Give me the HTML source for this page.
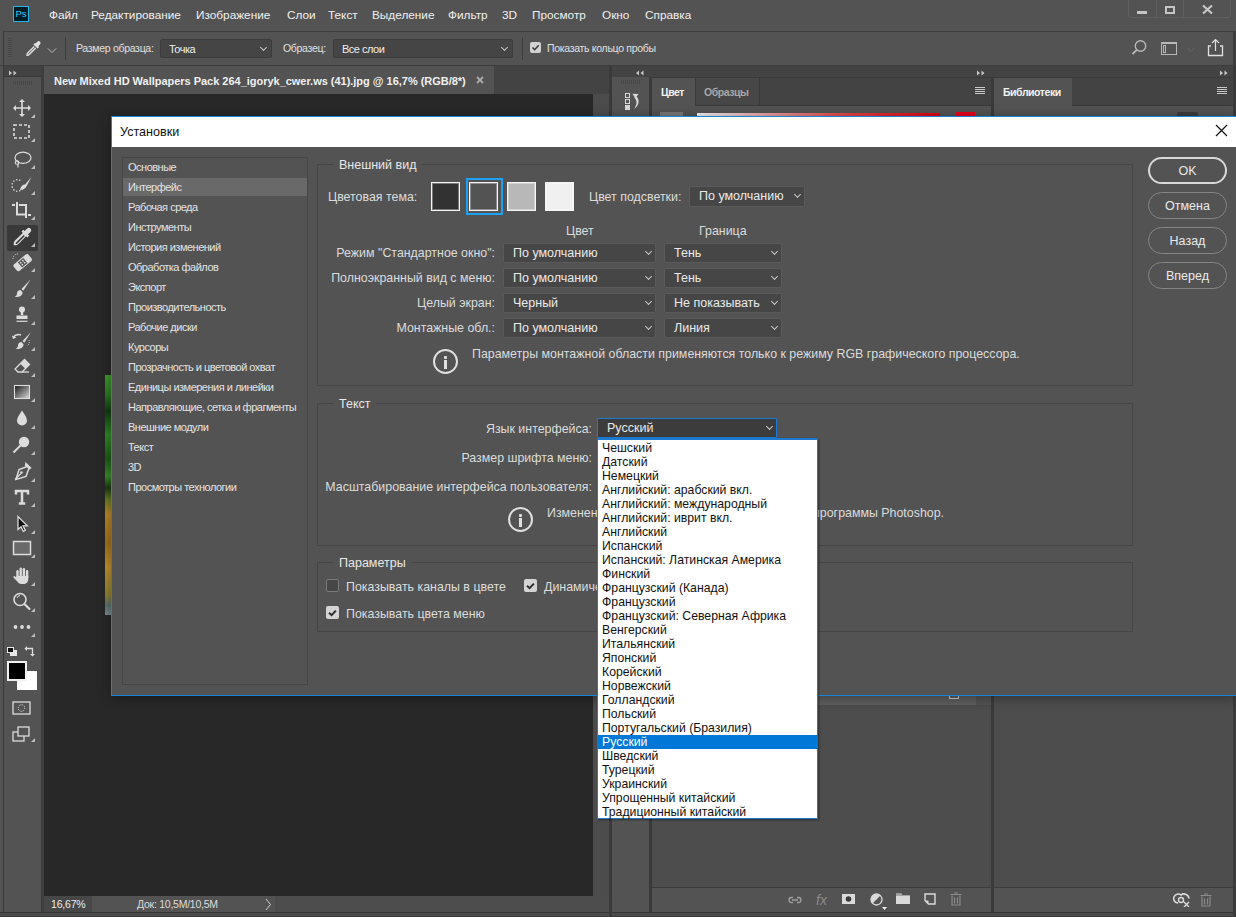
<!DOCTYPE html>
<html><head><meta charset="utf-8">
<style>
*{margin:0;padding:0;box-sizing:border-box}
html,body{width:1236px;height:917px;overflow:hidden;background:#535353;font-family:"Liberation Sans",sans-serif;color:#e6e6e6;position:relative}
.a{position:absolute}
.t{position:absolute;white-space:nowrap;font-size:12px;line-height:14px}
.mn{position:absolute;white-space:nowrap;font-size:11.8px;line-height:14px;color:#f0f0f0;top:8px}
.ob{position:absolute;white-space:nowrap;font-size:10.5px;letter-spacing:-0.3px;line-height:14px;color:#e0e0e0}
.osl{position:absolute;background:#454545;border:1px solid #3c3c3c;border-radius:2px;height:19px;top:39px}
.osl span{position:absolute;left:8px;top:2px;font-size:11px;letter-spacing:-0.5px;line-height:14px;color:#eee;white-space:nowrap}
.osl i,.sl i{position:absolute;width:6px;height:6px;border-right:1px solid #c8c8c8;border-bottom:1px solid #c8c8c8;transform:rotate(45deg)}
.osl i{right:5px;top:5px;width:5px;height:5px}
.sb{position:absolute;left:128px;white-space:nowrap;font-size:11px;line-height:14px;color:#e3e3e3;letter-spacing:-0.5px}
.lb{position:absolute;white-space:nowrap;font-size:12.4px;line-height:14px;color:#dcdcdc}
.lbr{position:absolute;white-space:nowrap;font-size:12.4px;line-height:14px;color:#dcdcdc;text-align:right}
.fs{position:absolute;border:1px solid #454545;border-radius:1px}
.lg{position:absolute;background:#535353;padding:1px 6px 0;white-space:nowrap;font-size:12.5px;line-height:14px;color:#e8e8e8}
.sl{position:absolute;background:#464646;border:1px solid #5a5a5a;border-radius:2px;height:20px}
.sl span{position:absolute;left:9px;top:2px;font-size:12.5px;line-height:14px;color:#eaeaea;white-space:nowrap}
.sl i{right:4px;top:5px;width:5px;height:5px}
.sw{position:absolute;width:29px;height:29px;border:1px solid #f4f4f4;box-shadow:inset 0 0 0 1px rgba(255,255,255,.35)}
.bt{position:absolute;left:1148px;width:79px;height:27px;border:1px solid #858585;border-radius:14px;text-align:center;font-size:12.5px;line-height:26px;color:#eaeaea}
.cb{position:absolute;width:13px;height:13px;border-radius:2px}
.li{position:absolute;left:0;width:220px;height:14px;padding-left:4px;font-size:12.25px;line-height:14px;color:#111;white-space:nowrap}
.li.hl{background:#0078d7;color:#fff}
.info{position:absolute;width:25px;height:25px;border:2px solid #e0e0e0;border-radius:50%}
.info:before{content:"";position:absolute;left:9px;top:4.5px;width:3px;height:3px;background:#e0e0e0;border-radius:1px}
.info:after{content:"";position:absolute;left:9px;top:9px;width:3px;height:9px;background:#e0e0e0}
.ic{position:absolute}
.tab{position:absolute;white-space:nowrap;font-size:10.5px;line-height:14px;font-weight:bold;letter-spacing:-0.45px}

</style></head><body>
<!-- ===== MENU BAR ===== -->
<div class="a" style="left:13px;top:6px;width:16px;height:16px;background:#001d26;border:1px solid #27b6e8"></div>
<div class="t" style="left:15.5px;top:8px;font-size:9.5px;line-height:11px;color:#3cc8f5;letter-spacing:-0.2px">Ps</div>
<div class="mn" style="left:49px">Файл</div>
<div class="mn" style="left:91px">Редактирование</div>
<div class="mn" style="left:196px">Изображение</div>
<div class="mn" style="left:287px">Слои</div>
<div class="mn" style="left:328px">Текст</div>
<div class="mn" style="left:372px">Выделение</div>
<div class="mn" style="left:448px">Фильтр</div>
<div class="mn" style="left:502px">3D</div>
<div class="mn" style="left:532px">Просмотр</div>
<div class="mn" style="left:602px">Окно</div>
<div class="mn" style="left:645px">Справка</div>
<!-- window controls -->
<div class="a" style="left:1128px;top:-3px;width:103px;height:21px;border:1px solid #5e5e5e;border-radius:3px"></div>
<div class="a" style="left:1156px;top:0;width:1px;height:18px;background:#5e5e5e"></div>
<div class="a" style="left:1183px;top:0;width:1px;height:18px;background:#5e5e5e"></div>
<div class="a" style="left:1137px;top:11px;width:10px;height:3px;background:#c4c4c4"></div>
<div class="a" style="left:1165px;top:6px;width:10px;height:8px;border:2px solid #c4c4c4"></div>
<svg class="ic" style="left:1201px;top:4px" width="13" height="11"><path d="M2 1.5L11 9.5M11 1.5L2 9.5" stroke="#c8c8c8" stroke-width="2.2"/></svg>

<!-- ===== OPTIONS BAR ===== -->
<div class="a" style="left:3px;top:31px;width:1233px;height:1px;background:#3e3e3e"></div>
<div class="a" style="left:3px;top:31px;width:1px;height:886px;background:#3a3a3a"></div>
<div class="a" style="left:1233px;top:32px;width:3px;height:34px;background:#3e3e3e"></div>
<div class="a" style="left:0;top:65px;width:1236px;height:1px;background:#3e3e3e"></div>
<svg class="ic" style="left:7px;top:38px" width="6" height="22"><path d="M1 .5h4M1 2.5h4M1 4.5h4M1 6.5h4M1 8.5h4M1 10.5h4M1 12.5h4M1 14.5h4M1 16.5h4M1 18.5h4" stroke="#474747" stroke-width="1"/></svg>
<svg class="ic" style="left:24px;top:40px" width="18" height="18"><path d="M11.5 3.5l1.8-1.8a1.9 1.9 0 0 1 2.7 2.7l-1.8 1.8 .9.9-1.5 1.5-4.2-4.2 1.5-1.5z" fill="#e0e0e0"/><path d="M10.3 6.5L4 12.8c-.9.9-1.2 1.8-1 2.5.7.3 1.6-.1 2.5-1l6.3-6.3" stroke="#e0e0e0" stroke-width="1.4" fill="none"/></svg>
<svg class="ic" style="left:47px;top:47px" width="10" height="7"><path d="M1 1.5l4 4 4-4" stroke="#bdbdbd" stroke-width="1" fill="none"/></svg>
<div class="a" style="left:65px;top:37px;width:1px;height:23px;background:#3e3e3e"></div>
<div class="ob" style="left:76px;top:41px">Размер образца:</div>
<div class="osl" style="left:160px;width:112px"><span>Точка</span><i></i></div>
<div class="ob" style="left:283px;top:41px">Образец:</div>
<div class="osl" style="left:333px;width:180px"><span>Все слои</span><i></i></div>
<div class="a" style="left:522px;top:37px;width:1px;height:23px;background:#3e3e3e"></div>
<div class="a" style="left:530px;top:42px;width:11px;height:11px;background:#d2d2d2;border-radius:2px"></div>
<svg class="ic" style="left:530px;top:42px" width="11" height="11"><path d="M2.5 5.5l2.2 2.2 4-4.5" stroke="#3a3a3a" stroke-width="1.6" fill="none"/></svg>
<div class="ob" style="left:547px;top:41px">Показать кольцо пробы</div>
<svg class="ic" style="left:1130px;top:39px" width="18" height="18"><circle cx="10.5" cy="7" r="5.2" stroke="#b8b8b8" stroke-width="1.4" fill="none"/><path d="M6.8 10.8L2.5 15" stroke="#b8b8b8" stroke-width="1.8"/></svg>
<svg class="ic" style="left:1160px;top:41px" width="19" height="15"><rect x="1.5" y="1.5" width="15" height="12" stroke="#b8b8b8" stroke-width="1" fill="none"/><path d="M1.5 2.5h15" stroke="#b8b8b8"/><rect x="3.5" y="4.5" width="2" height="7" stroke="#b8b8b8" stroke-width="1" fill="none"/></svg>
<svg class="ic" style="left:1186px;top:46px" width="10" height="7"><path d="M1 1.5l4 4 4-4" stroke="#6a6a6a" stroke-width="1" fill="none"/></svg>
<svg class="ic" style="left:1206px;top:38px" width="19" height="19"><path d="M5 8H2.5v9.5h14V8H14" stroke="#e0e0e0" stroke-width="1.3" fill="none"/><path d="M9.5 13V1.8M6 5l3.5-3.5L13 5" stroke="#e0e0e0" stroke-width="1.2" fill="none"/></svg>

<!-- ===== TOOLBAR ===== -->
<div class="a" style="left:4px;top:66px;width:37px;height:11px;background:#434343;border-bottom:1px solid #3a3a3a"></div>
<svg class="ic" style="left:9px;top:70px" width="10" height="6"><path d="M0 0.5l3 2.5-3 2.5zM4.5 0.5l3 2.5-3 2.5z" fill="#c8c8c8"/></svg>
<svg class="ic" style="left:13px;top:81px" width="22" height="5"><path d="M.5 0v4M2.5 0v4M4.5 0v4M6.5 0v4M8.5 0v4M10.5 0v4M12.5 0v4M14.5 0v4M16.5 0v4M18.5 0v4" stroke="#474747"/></svg>
<div class="a" style="left:41px;top:66px;width:3px;height:851px;background:#3e3e3e"></div>
<div id="tools"><svg class="ic" style="left:10px;top:96px" width="24" height="24" viewBox="0 0 24 24"><path d="M12 4.5v15M4.5 12h15" stroke="#dcdcdc" stroke-width="1.6"/><path d="M12 3l3 3h-6zM12 21l3-3h-6zM3 12l3-3v6zM21 12l-3-3v6z" fill="#dcdcdc"/></svg><svg class="ic" style="left:31px;top:114px" width="4" height="4"><path d="M4 0v4h-4z" fill="#bdbdbd"/></svg>
<svg class="ic" style="left:10px;top:120px" width="24" height="24" viewBox="0 0 24 24"><rect x="4" y="5" width="15" height="13" stroke="#dcdcdc" stroke-width="1.6" fill="none" stroke-dasharray="3 2"/></svg><svg class="ic" style="left:31px;top:138px" width="4" height="4"><path d="M4 0v4h-4z" fill="#bdbdbd"/></svg>
<svg class="ic" style="left:10px;top:147px" width="24" height="24" viewBox="0 0 24 24"><ellipse cx="13" cy="10.8" rx="8" ry="5.6" stroke="#dcdcdc" stroke-width="1.2" fill="none"/><circle cx="7" cy="15.5" r="1.8" stroke="#dcdcdc" stroke-width="1.1" fill="none"/><path d="M8 17v3.5" stroke="#dcdcdc" stroke-width="1.2"/></svg><svg class="ic" style="left:31px;top:165px" width="4" height="4"><path d="M4 0v4h-4z" fill="#bdbdbd"/></svg>
<svg class="ic" style="left:10px;top:173px" width="24" height="24" viewBox="0 0 24 24"><circle cx="12.13" cy="15.64" r="0.8" fill="#dcdcdc"/><circle cx="9.78" cy="17.78" r="0.8" fill="#dcdcdc"/><circle cx="6.72" cy="18.24" r="0.8" fill="#dcdcdc"/><circle cx="3.90" cy="16.88" r="0.8" fill="#dcdcdc"/><circle cx="2.22" cy="14.13" r="0.8" fill="#dcdcdc"/><circle cx="2.22" cy="10.87" r="0.8" fill="#dcdcdc"/><circle cx="3.90" cy="8.12" r="0.8" fill="#dcdcdc"/><circle cx="6.72" cy="6.76" r="0.8" fill="#dcdcdc"/><circle cx="9.78" cy="7.22" r="0.8" fill="#dcdcdc"/><path d="M21.5 4L15 11.5c-2.5 0-4.5 2-5 5.5 3 .2 5.8-1.5 6.8-4.2z" fill="#dcdcdc"/></svg><svg class="ic" style="left:31px;top:191px" width="4" height="4"><path d="M4 0v4h-4z" fill="#bdbdbd"/></svg>
<svg class="ic" style="left:10px;top:198px" width="24" height="24" viewBox="0 0 24 24"><path d="M7 4v12.5h9M16 7v13M9 7h8M2 7h3M18 17h3" stroke="#dcdcdc" stroke-width="2" fill="none"/></svg><svg class="ic" style="left:31px;top:216px" width="4" height="4"><path d="M4 0v4h-4z" fill="#bdbdbd"/></svg>
<div class="a" style="left:7px;top:225px;width:31px;height:26px;background:#393939;border-radius:2px"></div>
<svg class="ic" style="left:10px;top:225px" width="24" height="24" viewBox="0 0 24 24"><path d="M20.5 3.5a2.3 2.3 0 0 0-3.3 0l-2.6 2.6-1.3-1.3-1.8 1.8 1.3 1.3L5 15.6c-.9.9-1.3 2-1.3 3v1.7h1.7c1 0 2.1-.4 3-1.3l7.7-7.7 1.3 1.3 1.8-1.8-1.3-1.3 2.6-2.6a2.3 2.3 0 0 0 0-3.3z" fill="#dcdcdc"/><path d="M7.4 18.4c-.5.5-1.1.6-1.7.6 0-.6.1-1.2.6-1.7l7.4-7.4 1.1 1.1z" fill="#393939"/></svg><svg class="ic" style="left:31px;top:243px" width="4" height="4"><path d="M4 0v4h-4z" fill="#bdbdbd"/></svg>
<svg class="ic" style="left:10px;top:250px" width="24" height="24" viewBox="0 0 24 24"><g transform="rotate(-40 12.5 12.5)"><rect x="3" y="8.5" width="19" height="8.5" rx="2" fill="#dcdcdc"/><rect x="9" y="9.5" width="7" height="6.5" fill="#535353"/><circle cx="11" cy="11.5" r=".9" fill="#dcdcdc"/><circle cx="14" cy="11.5" r=".9" fill="#dcdcdc"/><circle cx="11" cy="14" r=".9" fill="#dcdcdc"/><circle cx="14" cy="14" r=".9" fill="#dcdcdc"/></g><path d="M3 9a5 5 0 0 1 6-5" stroke="#dcdcdc" stroke-width="1" stroke-dasharray="1 1.2" fill="none"/></svg><svg class="ic" style="left:31px;top:268px" width="4" height="4"><path d="M4 0v4h-4z" fill="#bdbdbd"/></svg>
<svg class="ic" style="left:10px;top:277px" width="24" height="24" viewBox="0 0 24 24"><path d="M20.5 2.5l-9 9.5 1.8 1.8z" fill="#dcdcdc"/><path d="M10.5 13c-2 0-3.5 1.5-3.5 3.5 0 1.5-.8 2.8-2.5 3.5 4 .5 8-1 8-4.8z" fill="#dcdcdc"/></svg><svg class="ic" style="left:31px;top:295px" width="4" height="4"><path d="M4 0v4h-4z" fill="#bdbdbd"/></svg>
<svg class="ic" style="left:10px;top:303px" width="24" height="24" viewBox="0 0 24 24"><circle cx="12" cy="6.5" r="3" fill="#dcdcdc"/><rect x="10.8" y="8" width="2.4" height="4" fill="#dcdcdc"/><path d="M6.5 12.5h11v3.5h-11z" fill="#dcdcdc"/><path d="M6.5 18.3h11" stroke="#dcdcdc" stroke-width="1.2"/></svg><svg class="ic" style="left:31px;top:321px" width="4" height="4"><path d="M4 0v4h-4z" fill="#bdbdbd"/></svg>
<svg class="ic" style="left:10px;top:329px" width="24" height="24" viewBox="0 0 24 24"><path d="M21 3l-8.5 9 1.8 1.8z" fill="#dcdcdc"/><path d="M11.5 13c-2 0-3.5 1.5-3.5 3.5 0 1.5-.8 2.8-2.5 3.5 4 .5 8-1 8-4.8z" fill="#dcdcdc"/><path d="M11 6c-3 -1-6 0-8 2.5" stroke="#dcdcdc" stroke-width="1.4" fill="none"/><path d="M2 6.5l1 3.5 3.3-1.5z" fill="#dcdcdc"/><path d="M19 11a5 5 0 0 1-2 6" stroke="#dcdcdc" stroke-width="1" stroke-dasharray="1 1.2" fill="none"/></svg><svg class="ic" style="left:31px;top:347px" width="4" height="4"><path d="M4 0v4h-4z" fill="#bdbdbd"/></svg>
<svg class="ic" style="left:10px;top:355px" width="24" height="24" viewBox="0 0 24 24"><path d="M14.5 4.5l5 5-7.5 7.5H8l-3-3z" fill="none" stroke="#dcdcdc" stroke-width="1.3"/><path d="M14.5 4.5l5 5-4.2 4.2-5-5z" fill="#dcdcdc"/><path d="M12 17h7" stroke="#dcdcdc" stroke-width="1.3"/></svg><svg class="ic" style="left:31px;top:373px" width="4" height="4"><path d="M4 0v4h-4z" fill="#bdbdbd"/></svg>
<svg class="ic" style="left:10px;top:380px" width="24" height="24" viewBox="0 0 24 24"><defs><linearGradient id="gr" x1="0" y1="0" x2="1" y2="1"><stop offset="0" stop-color="#151515"/><stop offset="1" stop-color="#dcdcdc"/></linearGradient></defs><rect x="4.5" y="5.5" width="15" height="13" fill="url(#gr)" stroke="#dcdcdc" stroke-width="1.1"/></svg><svg class="ic" style="left:31px;top:398px" width="4" height="4"><path d="M4 0v4h-4z" fill="#bdbdbd"/></svg>
<svg class="ic" style="left:10px;top:407px" width="24" height="24" viewBox="0 0 24 24"><path d="M12 3.5c-2 3.5-5 6.5-5 10a5 5 0 0 0 10 0c0-3.5-3-6.5-5-10z" fill="#dcdcdc"/></svg><svg class="ic" style="left:31px;top:425px" width="4" height="4"><path d="M4 0v4h-4z" fill="#bdbdbd"/></svg>
<svg class="ic" style="left:10px;top:433px" width="24" height="24" viewBox="0 0 24 24"><circle cx="14" cy="9" r="5.2" fill="#dcdcdc"/><path d="M10.5 12.5L3.5 19.5" stroke="#dcdcdc" stroke-width="2"/></svg><svg class="ic" style="left:31px;top:451px" width="4" height="4"><path d="M4 0v4h-4z" fill="#bdbdbd"/></svg>
<svg class="ic" style="left:10px;top:460px" width="24" height="24" viewBox="0 0 24 24"><path d="M16 3.5l4.5 4.5-2 1.5-2.5 7-10 3 3-10 7-2.5z" fill="none" stroke="#dcdcdc" stroke-width="1.5"/><path d="M5 19.5l6-6" stroke="#dcdcdc" stroke-width="1.2"/><circle cx="11.5" cy="12.5" r="1.3" fill="#dcdcdc"/><path d="M16 3.5l4.5 4.5-1.7 1.3-4.2-4.2z" fill="#dcdcdc"/></svg><svg class="ic" style="left:31px;top:478px" width="4" height="4"><path d="M4 0v4h-4z" fill="#bdbdbd"/></svg>
<svg class="ic" style="left:10px;top:485px" width="24" height="24" viewBox="0 0 24 24"><path d="M6 9.5V6h12v3.5M12 6v12.5M8.8 18.5h6.4" stroke="#dcdcdc" stroke-width="2.5" fill="none"/></svg><svg class="ic" style="left:31px;top:503px" width="4" height="4"><path d="M4 0v4h-4z" fill="#bdbdbd"/></svg>
<svg class="ic" style="left:10px;top:512px" width="24" height="24" viewBox="0 0 24 24"><path d="M8 4.5v13l3-2.8 2.3 4.6 2-1-2.3-4.4h4.3z" fill="#111" stroke="#dcdcdc" stroke-width="1.3"/></svg><svg class="ic" style="left:31px;top:530px" width="4" height="4"><path d="M4 0v4h-4z" fill="#bdbdbd"/></svg>
<svg class="ic" style="left:10px;top:536px" width="24" height="24" viewBox="0 0 24 24"><rect x="3.5" y="5.5" width="17" height="13" fill="#6a6a6a" stroke="#dcdcdc" stroke-width="1.5"/></svg><svg class="ic" style="left:31px;top:554px" width="4" height="4"><path d="M4 0v4h-4z" fill="#bdbdbd"/></svg>
<svg class="ic" style="left:10px;top:564px" width="24" height="24" viewBox="0 0 24 24"><rect x="6.3" y="6" width="2.4" height="9" rx="1.2" fill="#dcdcdc"/><rect x="9.5" y="3.5" width="2.4" height="10" rx="1.2" fill="#dcdcdc"/><rect x="12.7" y="4" width="2.4" height="10" rx="1.2" fill="#dcdcdc"/><rect x="15.9" y="6" width="2.4" height="9" rx="1.2" fill="#dcdcdc"/><path d="M6.3 12h12v3c0 3-2 5-5 5h-2c-2 0-3-1-4-2.5L3.5 13.5c-.5-.8.3-1.8 1.2-1.3L6.5 13.5z" fill="#dcdcdc"/></svg><svg class="ic" style="left:31px;top:582px" width="4" height="4"><path d="M4 0v4h-4z" fill="#bdbdbd"/></svg>
<svg class="ic" style="left:10px;top:590px" width="24" height="24" viewBox="0 0 24 24"><circle cx="10" cy="9.5" r="6" stroke="#dcdcdc" stroke-width="1.6" fill="none"/><path d="M14.5 14l5.5 5.5" stroke="#dcdcdc" stroke-width="2.2"/><path d="M7 8a3.5 3.5 0 0 1 3-2.5" stroke="#dcdcdc" stroke-width="1" fill="none"/></svg><svg class="ic" style="left:31px;top:608px" width="4" height="4"><path d="M4 0v4h-4z" fill="#bdbdbd"/></svg>
<svg class="ic" style="left:10px;top:615px" width="24" height="24" viewBox="0 0 24 24"><circle cx="5.5" cy="12" r="1.9" fill="#dcdcdc"/><circle cx="12" cy="12" r="1.9" fill="#dcdcdc"/><circle cx="18.5" cy="12" r="1.9" fill="#dcdcdc"/></svg><svg class="ic" style="left:31px;top:633px" width="4" height="4"><path d="M4 0v4h-4z" fill="#bdbdbd"/></svg>
<div class="a" style="left:10px;top:650px;width:7px;height:6px;background:#e6e6e6"></div><div class="a" style="left:7px;top:647px;width:7px;height:6px;background:#111;border:1px solid #e6e6e6"></div>
<svg class="ic" style="left:24px;top:645px" width="12" height="12"><path d="M2 3.5h6.5v6" stroke="#dcdcdc" stroke-width="1.3" fill="none"/><path d="M0.5 3.5l2.5-2.5v5zM8.5 11.5l-2.5-2.5h5z" fill="#dcdcdc"/></svg>
<div class="a" style="left:17px;top:671px;width:20px;height:19px;background:#fff"></div><div class="a" style="left:7px;top:661px;width:20px;height:20px;background:#000;border:2px solid #f0f0f0"></div>
<svg class="ic" style="left:12px;top:701px" width="19" height="14"><rect x="1" y="1" width="17" height="12" stroke="#dcdcdc" stroke-width="1.3" fill="none"/><circle cx="9.5" cy="7" r="3.3" stroke="#dcdcdc" stroke-width="1" stroke-dasharray="1 1" fill="none"/></svg>
<svg class="ic" style="left:12px;top:726px" width="19" height="16"><rect x="1" y="6" width="11" height="9" stroke="#dcdcdc" stroke-width="1.3" fill="#535353"/><rect x="6" y="1" width="11" height="9" stroke="#dcdcdc" stroke-width="1.3" fill="#535353"/></svg><svg class="ic" style="left:31px;top:738px" width="4" height="4"><path d="M4 0v4h-4z" fill="#bdbdbd"/></svg></div>

<!-- ===== DOC TAB BAR ===== -->
<div class="a" style="left:44px;top:66px;width:565px;height:29px;background:#434343"></div>
<div class="a" style="left:44px;top:66px;width:450px;height:29px;background:#535353"></div>
<div class="t" style="left:54px;top:74px;font-weight:bold;font-size:11px;color:#f0f0f0;letter-spacing:-0.02px">New Mixed HD Wallpapers Pack 264_igoryk_cwer.ws (41).jpg @ 16,7% (RGB/8*)</div>
<svg class="ic" style="left:476px;top:76px" width="8" height="8"><path d="M1 1l6 6M7 1l-6 6" stroke="#a8a8a8" stroke-width="1.9"/></svg>
<!-- canvas -->
<div class="a" style="left:44px;top:94px;width:549px;height:802px;background:#282828"></div>
<div class="a" style="left:593px;top:94px;width:16px;height:802px;background:#4c4c4c"></div>
<!-- image sliver -->
<div class="a" style="left:105px;top:375px;width:6px;height:240px;background:linear-gradient(180deg,#3f9a2c 0%,#2a7a22 8%,#123a10 15%,#2e8a26 25%,#1d5a18 35%,#3a8a2a 42%,#1a3a14 47%,#6a7a24 52%,#b8862a 58%,#a0701c 70%,#c09030 80%,#8a8030 92%,#5a7070 96%,#7a8a90 100%)"></div>
<!-- status bar -->
<div class="a" style="left:44px;top:896px;width:565px;height:16px;background:#535353"></div>
<div class="a" style="left:44px;top:896px;width:48px;height:16px;background:#474747"></div>
<div class="t" style="left:51px;top:897px;font-size:10.5px;letter-spacing:-0.2px;color:#eee">16,67%</div>
<div class="t" style="left:137px;top:897px;font-size:10.5px;letter-spacing:-0.25px;color:#ddd">Док: 10,5M/10,5M</div>
<svg class="ic" style="left:265px;top:898px" width="7" height="13"><path d="M1 1l4.5 5.5-4.5 5.5" stroke="#cfcfcf" stroke-width="1" fill="none"/></svg>
<div class="a" style="left:275px;top:896px;width:334px;height:16px;background:#4d4d4d"></div>
<div class="a" style="left:0;top:912px;width:1236px;height:5px;background:#4a4a4a;border-top:1px solid #363636;border-bottom:1px solid #3a3a3a"></div>

<!-- ===== RIGHT PANELS ===== -->
<div class="a" style="left:609px;top:66px;width:3px;height:851px;background:#3a3a3a"></div>
<div class="a" style="left:612px;top:66px;width:624px;height:11px;background:#434343"></div>
<svg class="ic" style="left:636px;top:70px" width="10" height="6"><path d="M3 0.5l-3 2.5 3 2.5zM7.5 0.5l-3 2.5 3 2.5z" fill="#c8c8c8"/></svg>
<svg class="ic" style="left:977px;top:70px" width="10" height="6"><path d="M0 0.5l3 2.5-3 2.5zM4.5 0.5l3 2.5-3 2.5z" fill="#c8c8c8"/></svg>
<svg class="ic" style="left:1220px;top:70px" width="10" height="6"><path d="M0 0.5l3 2.5-3 2.5zM4.5 0.5l3 2.5-3 2.5z" fill="#c8c8c8"/></svg>
<!-- icon column -->
<div class="a" style="left:612px;top:77px;width:37px;height:835px;background:#535353"></div>
<div class="a" style="left:649px;top:77px;width:3px;height:835px;background:#3a3a3a"></div>
<svg class="ic" style="left:621px;top:80px" width="22" height="5"><path d="M.5 0v4M2.5 0v4M4.5 0v4M6.5 0v4M8.5 0v4M10.5 0v4M12.5 0v4M14.5 0v4M16.5 0v4M18.5 0v4" stroke="#474747"/></svg>
<svg class="ic" style="left:622px;top:92px" width="18" height="18"><rect x="3.5" y="1.5" width="4" height="4" stroke="#d8d8d8" fill="none"/><rect x="3.5" y="7.5" width="4" height="4" stroke="#d8d8d8" fill="none"/><rect x="3" y="13" width="5" height="5" fill="#d8d8d8"/><path d="M13.5 4c2.5 1.5 3.5 3.5 3 6.5s-2 4.5-4.5 6.5c1.5-2.5 2.5-4.5 2.5-6.5s-.8-3.5-2-4.5z" fill="#d8d8d8"/><path d="M10.5 1.8l6 .2-3.2 4.5z" fill="#d8d8d8"/></svg>
<!-- color panel column -->
<div class="a" style="left:652px;top:77px;width:339px;height:835px;background:#535353"></div>
<div class="a" style="left:652px;top:77px;width:339px;height:28px;background:#434343"></div>
<div class="a" style="left:652px;top:78px;width:43px;height:28px;background:#535353"></div>
<div class="a" style="left:695px;top:78px;width:65px;height:27px;background:#474747;border-left:1px solid #3a3a3a;border-right:1px solid #3a3a3a"></div>
<div class="tab" style="left:661px;top:85px;color:#f2f2f2">Цвет</div>
<div class="tab" style="left:704px;top:85px;color:#a8a8a8">Образцы</div>
<svg class="ic" style="left:974px;top:86px" width="13" height="10"><path d="M1 1.5h10M1 3.5h10M1 5.5h10M1 7.5h10" stroke="#c8c8c8" stroke-width="1"/></svg>
<div class="a" style="left:660px;top:112px;width:23px;height:4px;background:#777"></div>
<div class="a" style="left:697px;top:113px;width:243px;height:4px;background:linear-gradient(90deg,#f2f2f2,#e04848 60%,#e00010)"></div>
<div class="a" style="left:956px;top:112px;width:19px;height:5px;background:#e8001a"></div>
<!-- libraries column -->
<div class="a" style="left:991px;top:77px;width:3px;height:835px;background:#3a3a3a"></div>
<div class="a" style="left:994px;top:77px;width:239px;height:835px;background:#535353"></div>
<div class="a" style="left:994px;top:77px;width:239px;height:28px;background:#434343"></div>
<div class="a" style="left:994px;top:78px;width:78px;height:28px;background:#535353"></div>
<div class="tab" style="left:1003px;top:85px;color:#f2f2f2">Библиотеки</div>
<svg class="ic" style="left:1216px;top:86px" width="13" height="10"><path d="M1 1.5h10M1 3.5h10M1 5.5h10M1 7.5h10" stroke="#c8c8c8" stroke-width="1"/></svg>
<div class="a" style="left:1177px;top:112px;width:21px;height:5px;background:#3c3c3c;border-radius:2px"></div>
<div class="a" style="left:1233px;top:66px;width:3px;height:851px;background:#3a3a3a"></div>
<div class="a" style="left:652px;top:77px;width:581px;height:1px;background:#3a3a3a"></div>
<div class="a" style="left:695px;top:105px;width:296px;height:1px;background:#3a3a3a"></div>
<div class="a" style="left:1072px;top:105px;width:161px;height:1px;background:#3a3a3a"></div>
<!-- layers panel below dialog -->
<div class="a" style="left:652px;top:696px;width:324px;height:9px;background:#5e5e5e"></div>
<div class="a" style="left:949px;top:696px;width:10px;height:3px;border:1px solid #d0d0d0;border-top:none"></div>
<div class="a" style="left:652px;top:705px;width:339px;height:182px;background:#4d4d4d"></div>
<div class="a" style="left:652px;top:887px;width:339px;height:1px;background:#3c3c3c"></div>
<div class="a" style="left:994px;top:696px;width:239px;height:191px;background:#4d4d4d"></div>
<div class="a" style="left:994px;top:887px;width:239px;height:1px;background:#3c3c3c"></div>
<div id="licons"><svg class="ic" style="left:787px;top:894px" width="16" height="12"><path d="M6 3.5H4.5a2.5 2.5 0 0 0 0 5H6M10 3.5h1.5a2.5 2.5 0 0 1 0 5H10M5 6h6" stroke="#a0a0a0" stroke-width="1.3" fill="none"/></svg>
<div class="t" style="left:816px;top:892px;font-size:14px;line-height:16px;font-style:italic;color:#8a8a8a">fx</div>
<svg class="ic" style="left:842px;top:894px" width="13" height="10"><rect x="0" y="0" width="13" height="10" fill="#dadada"/><circle cx="6.5" cy="5" r="2.8" fill="#3a3a3a"/></svg>
<svg class="ic" style="left:870px;top:893px" width="13" height="13"><circle cx="6.5" cy="6.5" r="5.5" fill="none" stroke="#dadada" stroke-width="1.3"/><path d="M2.6 10.4A5.5 5.5 0 0 1 10.4 2.6z" fill="#dadada"/></svg><svg class="ic" style="left:882px;top:907px" width="5" height="3"><path d="M0 0h5l-2.5 3z" fill="#eee"/></svg>
<svg class="ic" style="left:896px;top:893px" width="14" height="11"><path d="M0 0.5h5.5l1 1.5H14v9H0z" fill="#dadada"/><path d="M0 2h14" stroke="#535353" stroke-width=".8"/></svg>
<svg class="ic" style="left:924px;top:893px" width="12" height="12"><path d="M1 1h10v10H4.5L1 7.5z" fill="none" stroke="#dadada" stroke-width="1.4"/><path d="M1 7.5h3.5V11z" fill="#dadada"/></svg>
<svg class="ic" style="left:950px;top:892px" width="12" height="14"><path d="M0.5 2.5h11M4 1h4M2 3.5v9.5h8V3.5M4.5 5.5v6M7.5 5.5v6" stroke="#8a8a8a" stroke-width="1.2" fill="none"/></svg>
<svg class="ic" style="left:1173px;top:892px" width="18" height="15"><path d="M5 11a4.5 4.5 0 1 1 3-8 5 5 0 0 1 8 3.5" stroke="#dadada" stroke-width="1.6" fill="none"/><circle cx="8" cy="8" r="2.5" stroke="#dadada" stroke-width="1.4" fill="none"/><path d="M11 10l5 5M16 10l-5 5" stroke="#dadada" stroke-width="1.4"/></svg>
<svg class="ic" style="left:1200px;top:893px" width="12" height="14"><path d="M0.5 2.5h11M4 1h4M2 3.5v9.5h8V3.5M4.5 5.5v6M7.5 5.5v6" stroke="#8a8a8a" stroke-width="1.2" fill="none"/></svg></div>

<!-- ===== DIALOG ===== -->
<div class="a" style="left:111px;top:116px;width:1125px;height:580px;background:#535353;border:1px solid #1883d7;border-right:none;box-shadow:0 2px 12px rgba(0,0,0,.35)"></div>
<div class="a" style="left:112px;top:117px;width:1124px;height:30px;background:#fff"></div>
<div class="t" style="left:120px;top:125px;font-size:12.6px;line-height:15px;color:#111">Установки</div>
<svg class="ic" style="left:1215px;top:124px" width="13" height="13"><path d="M1 1l11 11M12 1L1 12" stroke="#111" stroke-width="1.2"/></svg>
<!-- sidebar -->
<div class="a" style="left:122px;top:157px;width:186px;height:528px;border:1px solid #464646"></div>
<div class="a" style="left:123px;top:178px;width:184px;height:18px;background:#696969"></div>
<div class="sb" style="top:160px">Основные</div>
<div class="sb" style="top:180px">Интерфейс</div>
<div class="sb" style="top:200px">Рабочая среда</div>
<div class="sb" style="top:220px">Инструменты</div>
<div class="sb" style="top:240px">История изменений</div>
<div class="sb" style="top:260px">Обработка файлов</div>
<div class="sb" style="top:280px">Экспорт</div>
<div class="sb" style="top:300px">Производительность</div>
<div class="sb" style="top:320px">Рабочие диски</div>
<div class="sb" style="top:340px">Курсоры</div>
<div class="sb" style="top:360px">Прозрачность и цветовой охват</div>
<div class="sb" style="top:380px">Единицы измерения и линейки</div>
<div class="sb" style="top:400px">Направляющие, сетка и фрагменты</div>
<div class="sb" style="top:420px">Внешние модули</div>
<div class="sb" style="top:440px">Текст</div>
<div class="sb" style="top:460px">3D</div>
<div class="sb" style="top:480px">Просмотры технологии</div>
<!-- fieldset 1 -->
<div class="fs" style="left:317px;top:164px;width:816px;height:222px"></div>
<div class="lg" style="left:333px;top:157px">Внешний вид</div>
<div class="lb" style="left:328px;top:190px">Цветовая тема:</div>
<div class="sw" style="left:431px;top:182px;background:#323232"></div>
<div class="a" style="left:466px;top:178px;width:37px;height:37px;border:2px solid #1da1f2"></div>
<div class="sw" style="left:469px;top:182px;background:#535353"></div>
<div class="sw" style="left:507px;top:182px;background:#b8b8b8"></div>
<div class="sw" style="left:545px;top:182px;background:#f0f0f0"></div>
<div class="lb" style="left:589px;top:190px">Цвет подсветки:</div>
<div class="sl" style="left:689px;top:186px;width:116px;height:21px"><span>По умолчанию</span><i></i></div>
<div class="lb" style="left:566px;top:224px">Цвет</div>
<div class="lb" style="left:699px;top:224px">Граница</div>
<div class="lbr" style="right:741px;top:246px">Режим "Стандартное окно":</div>
<div class="lbr" style="right:741px;top:271px">Полноэкранный вид с меню:</div>
<div class="lbr" style="right:741px;top:296px">Целый экран:</div>
<div class="lbr" style="right:741px;top:321px">Монтажные обл.:</div>
<div class="sl" style="left:503px;top:243px;width:153px"><span>По умолчанию</span><i></i></div>
<div class="sl" style="left:503px;top:268px;width:153px"><span>По умолчанию</span><i></i></div>
<div class="sl" style="left:503px;top:293px;width:153px"><span>Черный</span><i></i></div>
<div class="sl" style="left:503px;top:318px;width:153px"><span>По умолчанию</span><i></i></div>
<div class="sl" style="left:664px;top:243px;width:118px"><span>Тень</span><i></i></div>
<div class="sl" style="left:664px;top:268px;width:118px"><span>Тень</span><i></i></div>
<div class="sl" style="left:664px;top:293px;width:118px"><span>Не показывать</span><i></i></div>
<div class="sl" style="left:664px;top:318px;width:118px"><span>Линия</span><i></i></div>
<div class="info" style="left:433px;top:349px"></div>
<div class="lb" style="left:472px;top:347px">Параметры монтажной области применяются только к режиму RGB графического процессора.</div>
<!-- fieldset 2 -->
<div class="fs" style="left:317px;top:403px;width:816px;height:143px"></div>
<div class="lg" style="left:333px;top:396px">Текст</div>
<div class="lbr" style="right:644px;top:422px">Язык интерфейса:</div>
<div class="lbr" style="right:644px;top:451px">Размер шрифта меню:</div>
<div class="lbr" style="right:644px;top:480px">Масштабирование интерфейса пользователя:</div>
<div class="info" style="left:508px;top:507px"></div>
<div class="lb" style="left:547px;top:506px">Изменения вступят</div>
<div class="lbr" style="right:292px;top:506px">после перезапуска программы Photoshop.</div>
<!-- fieldset 3 -->
<div class="fs" style="left:317px;top:562px;width:816px;height:70px"></div>
<div class="lg" style="left:333px;top:555px">Параметры</div>
<div class="cb" style="left:326px;top:579px;border:1px solid #7a7a7a;background:#474747"></div>
<div class="lb" style="left:346px;top:580px">Показывать каналы в цвете</div>
<div class="cb" style="left:524px;top:579px;background:#d4d4d4"></div>
<svg class="ic" style="left:524px;top:579px" width="13" height="13"><path d="M3 6.8l2.6 2.4 4.3-4.6" stroke="#2e2e2e" stroke-width="2" fill="none"/></svg>
<div class="lb" style="left:544px;top:580px">Динамические цветовые шкалы</div>
<div class="cb" style="left:326px;top:606px;background:#d4d4d4"></div>
<svg class="ic" style="left:326px;top:606px" width="13" height="13"><path d="M3 6.8l2.6 2.4 4.3-4.6" stroke="#2e2e2e" stroke-width="2" fill="none"/></svg>
<div class="lb" style="left:346px;top:607px">Показывать цвета меню</div>
<!-- buttons -->
<div class="bt" style="top:157px;border:2px solid #d8d8d8;line-height:25px">OK</div>
<div class="bt" style="top:192px">Отмена</div>
<div class="bt" style="top:227px">Назад</div>
<div class="bt" style="top:262px">Вперед</div>
<!-- language select -->
<div class="sl" style="left:597px;top:418px;width:180px;height:20px;border:1px solid #1c7ad0;background:#3c3c3c;border-radius:1px"><span>Русский</span><i></i></div>
<div class="a" style="left:597px;top:438px;width:221px;height:381px;background:#fff;border:1px solid #1c7ad0;border-top:2px solid #1c7ad0;box-shadow:1px 1px 2px rgba(0,0,0,.4)">
<div class="a" style="left:0;top:1px;width:220px;height:378px">
<div class="li" style="top:0px"><span>Чешский</span></div>
<div class="li" style="top:14px"><span>Датский</span></div>
<div class="li" style="top:28px"><span>Немецкий</span></div>
<div class="li" style="top:42px"><span>Английский: арабский вкл.</span></div>
<div class="li" style="top:56px"><span>Английский: международный</span></div>
<div class="li" style="top:70px"><span>Английский: иврит вкл.</span></div>
<div class="li" style="top:84px"><span>Английский</span></div>
<div class="li" style="top:98px"><span>Испанский</span></div>
<div class="li" style="top:112px"><span>Испанский: Латинская Америка</span></div>
<div class="li" style="top:126px"><span>Финский</span></div>
<div class="li" style="top:140px"><span>Французский (Канада)</span></div>
<div class="li" style="top:154px"><span>Французский</span></div>
<div class="li" style="top:168px"><span>Французский: Северная Африка</span></div>
<div class="li" style="top:182px"><span>Венгерский</span></div>
<div class="li" style="top:196px"><span>Итальянский</span></div>
<div class="li" style="top:210px"><span>Японский</span></div>
<div class="li" style="top:224px"><span>Корейский</span></div>
<div class="li" style="top:238px"><span>Норвежский</span></div>
<div class="li" style="top:252px"><span>Голландский</span></div>
<div class="li" style="top:266px"><span>Польский</span></div>
<div class="li" style="top:280px"><span>Португальский (Бразилия)</span></div>
<div class="li hl" style="top:294px"><span>Русский</span></div>
<div class="li" style="top:308px"><span>Шведский</span></div>
<div class="li" style="top:322px"><span>Турецкий</span></div>
<div class="li" style="top:336px"><span>Украинский</span></div>
<div class="li" style="top:350px"><span>Упрощенный китайский</span></div>
<div class="li" style="top:364px"><span>Традиционный китайский</span></div>
</div></div>

</body></html>
